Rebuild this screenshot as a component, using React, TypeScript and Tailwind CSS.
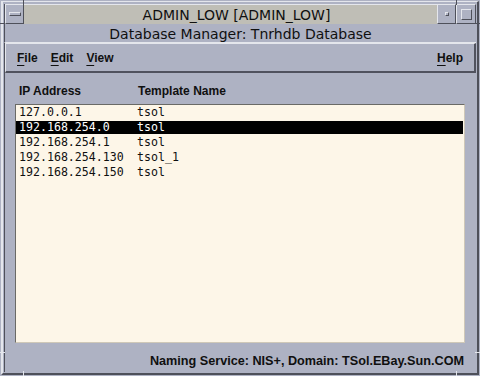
import React from 'react';

const rows = [
  { ip: '127.0.0.1', tpl: 'tsol' },
  { ip: '192.168.254.0', tpl: 'tsol', selected: true },
  { ip: '192.168.254.1', tpl: 'tsol' },
  { ip: '192.168.254.130', tpl: 'tsol_1' },
  { ip: '192.168.254.150', tpl: 'tsol' },
];

// Motif style mnemonic: underline the first letter only
const MenuItem: React.FC<{ label: string }> = ({ label }) => (
  <span>
    <span className="underline underline-offset-[3px] decoration-[1px]">{label[0]}</span>
    {label.slice(1)}
  </span>
);

const App: React.FC = () => {
  return (
    <div className="w-[480px] h-[376px] bg-[#aeb2c3] p-[1px] flex flex-col overflow-hidden relative text-[#101010] font-['DejaVu_Sans',sans-serif]">
      {/* window frame */}
      <div className="flex-1 flex flex-col border-t border-l-2 border-r-2 border-b-2 border-t-[#e4e6ec] border-l-[#e4e6ec] border-r-[#4e505a] border-b-[#4e505a] pt-[2px] px-[1px] pb-[1px]">
        {/* title bar */}
        <div className="h-[20px] flex border-l border-[#4e505a]">
          <div className="w-[19px] h-full flex items-center justify-center border-t border-l border-[#e4e6ec] border-r border-b border-r-[#4e505a] border-b-[#4e505a]">
            <div className="w-[12px] h-[4px] border-t border-l border-[#e4e6ec] border-r border-b border-r-[#4e505a] border-b-[#4e505a]" />
          </div>
          <div className="flex-1 bg-[#bfbeb6] border-t border-[#e4e6ec] flex items-center justify-center text-[14px] leading-none pl-[12px]">
            ADMIN_LOW [ADMIN_LOW]
          </div>
          <div className="w-[19px] h-full flex items-center justify-center border-t border-l border-[#e4e6ec] border-r border-b border-r-[#4e505a] border-b-[#4e505a]">
            <div className="w-[4px] h-[4px] border-t border-l border-[#e4e6ec] border-r border-b border-r-[#4e505a] border-b-[#4e505a]" />
          </div>
          <div className="w-[20px] h-full flex items-center justify-center border-t border-l border-[#e4e6ec] border-r border-b border-r-[#4e505a] border-b-[#4e505a]">
            <div className="w-[11px] h-[11px] border-t border-l border-[#e4e6ec] border-r border-b border-r-[#4e505a] border-b-[#4e505a]" />
          </div>
        </div>

        {/* label bar */}
        <div className="h-[19px] flex items-center justify-center text-[14px] leading-none pt-[2px] border-l border-[#4e505a] border-b border-b-[#e4e6ec]">
          Database Manager: Tnrhdb Database
        </div>

        {/* client area */}
        <div className="flex-1 flex flex-col border-l border-[#4e505a] font-['Liberation_Sans',Arial,sans-serif] font-bold text-[12px]">
          {/* menubar */}
          <div className="h-[30px] flex items-center border-t border-l border-[#e4e6ec] border-r-2 border-b-2 border-r-[#50525e] border-b-[#50525e] pl-[11px] pr-[11px]">
            <div className="flex gap-[13px]">
              <MenuItem label="File" />
              <MenuItem label="Edit" />
              <MenuItem label="View" />
            </div>
            <div className="ml-auto">
              <MenuItem label="Help" />
            </div>
          </div>

          {/* column headers */}
          <div className="h-[31px] flex pl-[14px] pt-[11px] leading-[14px]">
            <div className="w-[119px]">IP Address</div>
            <div>Template Name</div>
          </div>

          {/* list */}
          <div className="ml-[10px] w-[450px] h-[239px] bg-[#fdf6e8] border-t border-l border-[#6a6a66] border-r border-b border-r-[#cfc8b8] border-b-[#cfc8b8] font-['DejaVu_Sans_Mono',monospace] font-normal text-[11.6px]">
            {rows.map((r) => (
              <div key={r.ip} className="h-[15px] flex items-center">
                <div
                  className={`w-[447px] h-[13px] flex items-center pl-[3px] ${
                    r.selected ? 'bg-black text-white' : ''
                  }`}
                >
                  <span className="w-[118px]">{r.ip}</span>
                  <span>{r.tpl}</span>
                </div>
              </div>
            ))}
          </div>

          {/* status */}
          <div className="flex-1 flex items-center justify-end pr-[12px] pt-[7px] text-[12.65px]">
            Naming Service: NIS+, Domain: TSol.EBay.Sun.COM
          </div>
        </div>
      </div>

      {/* resize handle ticks on the frame */}
      <div className="absolute left-[23px] top-0 w-px h-[5px] bg-[#4e505a]" />
      <div className="absolute left-0 top-[23px] w-[5px] h-px bg-[#4e505a]" />
      <div className="absolute right-[23px] top-0 w-px h-[5px] bg-[#4e505a]" />
      <div className="absolute right-0 top-[23px] w-[5px] h-px bg-[#4e505a]" />
      <div className="absolute left-[23px] bottom-0 w-px h-[5px] bg-[#e4e6ec]" />
      <div className="absolute left-0 bottom-[23px] w-[5px] h-px bg-[#e4e6ec]" />
      <div className="absolute right-[23px] bottom-0 w-px h-[5px] bg-[#e4e6ec]" />
      <div className="absolute right-0 bottom-[23px] w-[5px] h-px bg-[#e4e6ec]" />
    </div>
  );
};

export default App;
